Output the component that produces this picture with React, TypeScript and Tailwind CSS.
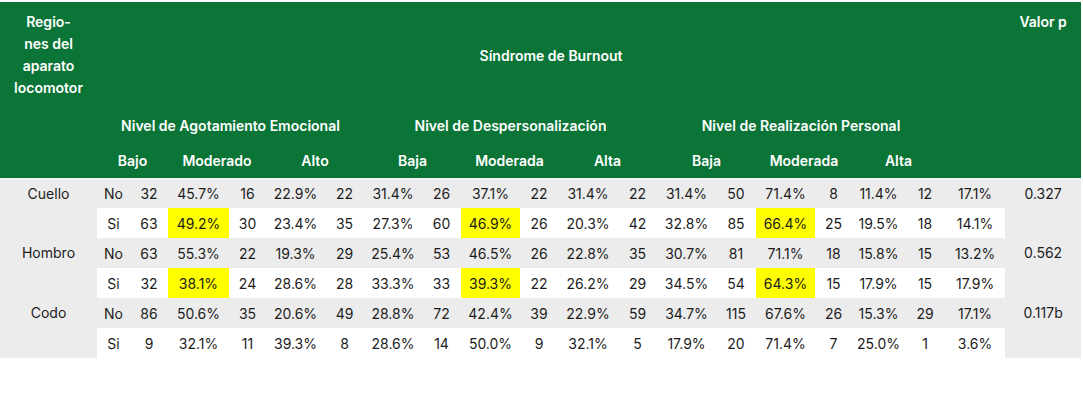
const widths = [97, 33, 38, 61, 37, 59, 39, 58, 39, 59, 38, 60, 39, 59, 40, 59, 37, 53, 40, 60, 76];

type Row = {
  region: string;
  valor?: string;
  sino: string;
  values: string[];
  marked?: boolean;
};

const rows: Row[] = [
  {
    region: "Cuello",
    valor: "0.327",
    sino: "No",
    values: ["32", "45.7%", "16", "22.9%", "22", "31.4%", "26", "37.1%", "22", "31.4%", "22", "31.4%", "50", "71.4%", "8", "11.4%", "12", "17.1%"],
  },
  {
    region: "Cuello",
    sino: "Si",
    marked: true,
    values: ["63", "49.2%", "30", "23.4%", "35", "27.3%", "60", "46.9%", "26", "20.3%", "42", "32.8%", "85", "66.4%", "25", "19.5%", "18", "14.1%"],
  },
  {
    region: "Hombro",
    valor: "0.562",
    sino: "No",
    values: ["63", "55.3%", "22", "19.3%", "29", "25.4%", "53", "46.5%", "26", "22.8%", "35", "30.7%", "81", "71.1%", "18", "15.8%", "15", "13.2%"],
  },
  {
    region: "Hombro",
    sino: "Si",
    marked: true,
    values: ["32", "38.1%", "24", "28.6%", "28", "33.3%", "33", "39.3%", "22", "26.2%", "29", "34.5%", "54", "64.3%", "15", "17.9%", "15", "17.9%"],
  },
  {
    region: "Codo",
    valor: "0.117b",
    sino: "No",
    values: ["86", "50.6%", "35", "20.6%", "49", "28.8%", "72", "42.4%", "39", "22.9%", "59", "34.7%", "115", "67.6%", "26", "15.3%", "29", "17.1%"],
  },
  {
    region: "Codo",
    sino: "Si",
    values: ["9", "32.1%", "11", "39.3%", "8", "28.6%", "14", "50.0%", "9", "32.1%", "5", "17.9%", "20", "71.4%", "7", "25.0%", "1", "3.6%"],
  },
];

// columns highlighted in yellow on the marked rows
const highlight = [1, 7, 13];

const levels = [
  { title: "Nivel de Agotamiento Emocional", grades: ["Bajo", "Moderado", "Alto"] },
  { title: "Nivel de Despersonalización", grades: ["Baja", "Moderada", "Alta"] },
  { title: "Nivel de Realización Personal", grades: ["Baja", "Moderada", "Alta"] },
];

export default function App() {
  return (
    <div className="bg-white pt-[2px] h-[412px] font-['Inter',sans-serif] text-[14px]">
      <table className="table-fixed border-collapse w-[1081px]">
        <colgroup>
          {widths.map((w, i) => (
            <col key={i} style={{ width: w }} />
          ))}
        </colgroup>
        <thead className="bg-[#0b7538] text-white font-semibold">
          <tr className="h-[106px]">
            <th rowSpan={3} className="align-top pt-[9px] leading-[22px] font-semibold text-center">
              Regio-
              <br />
              nes del
              <br />
              aparato
              <br />
              locomotor
            </th>
            <th colSpan={19} className="font-semibold text-center align-middle">
              Síndrome de Burnout
            </th>
            <th rowSpan={3} className="align-top pt-[9px] leading-[22px] font-semibold text-center">
              Valor p
            </th>
          </tr>
          <tr className="h-[35px]">
            {levels.map((l) => (
              <th key={l.title} colSpan={6} className="font-semibold text-center">
                {l.title}
              </th>
            ))}
            <th />
          </tr>
          <tr className="h-[35px]">
            {levels.map((l) =>
              l.grades.map((g) => (
                <th key={l.title + g} colSpan={2} className="font-semibold text-center">
                  {g}
                </th>
              ))
            )}
            <th />
          </tr>
        </thead>
        <tbody className="text-[#1c1c1c] border-t border-[#f4f4f4]">
          {rows.map((r, ri) => (
            <tr key={ri} className={`h-[30px] ${r.sino === "No" ? "bg-[#ececec]" : "bg-white"}`}>
              {r.sino === "No" && (
                <td rowSpan={2} className="bg-[#ececec] align-top text-center leading-[30px]">
                  {r.region}
                </td>
              )}
              <td className="text-center">{r.sino}</td>
              {r.values.map((v, vi) => (
                <td
                  key={vi}
                  className={`text-center ${r.marked && highlight.includes(vi) ? "bg-[#ffff00]" : ""}`}
                >
                  {v}
                </td>
              ))}
              {r.sino === "No" && (
                <td rowSpan={2} className="bg-[#ececec] align-top text-center leading-[30px]">
                  {r.valor}
                </td>
              )}
            </tr>
          ))}
        </tbody>
      </table>
    </div>
  );
}
